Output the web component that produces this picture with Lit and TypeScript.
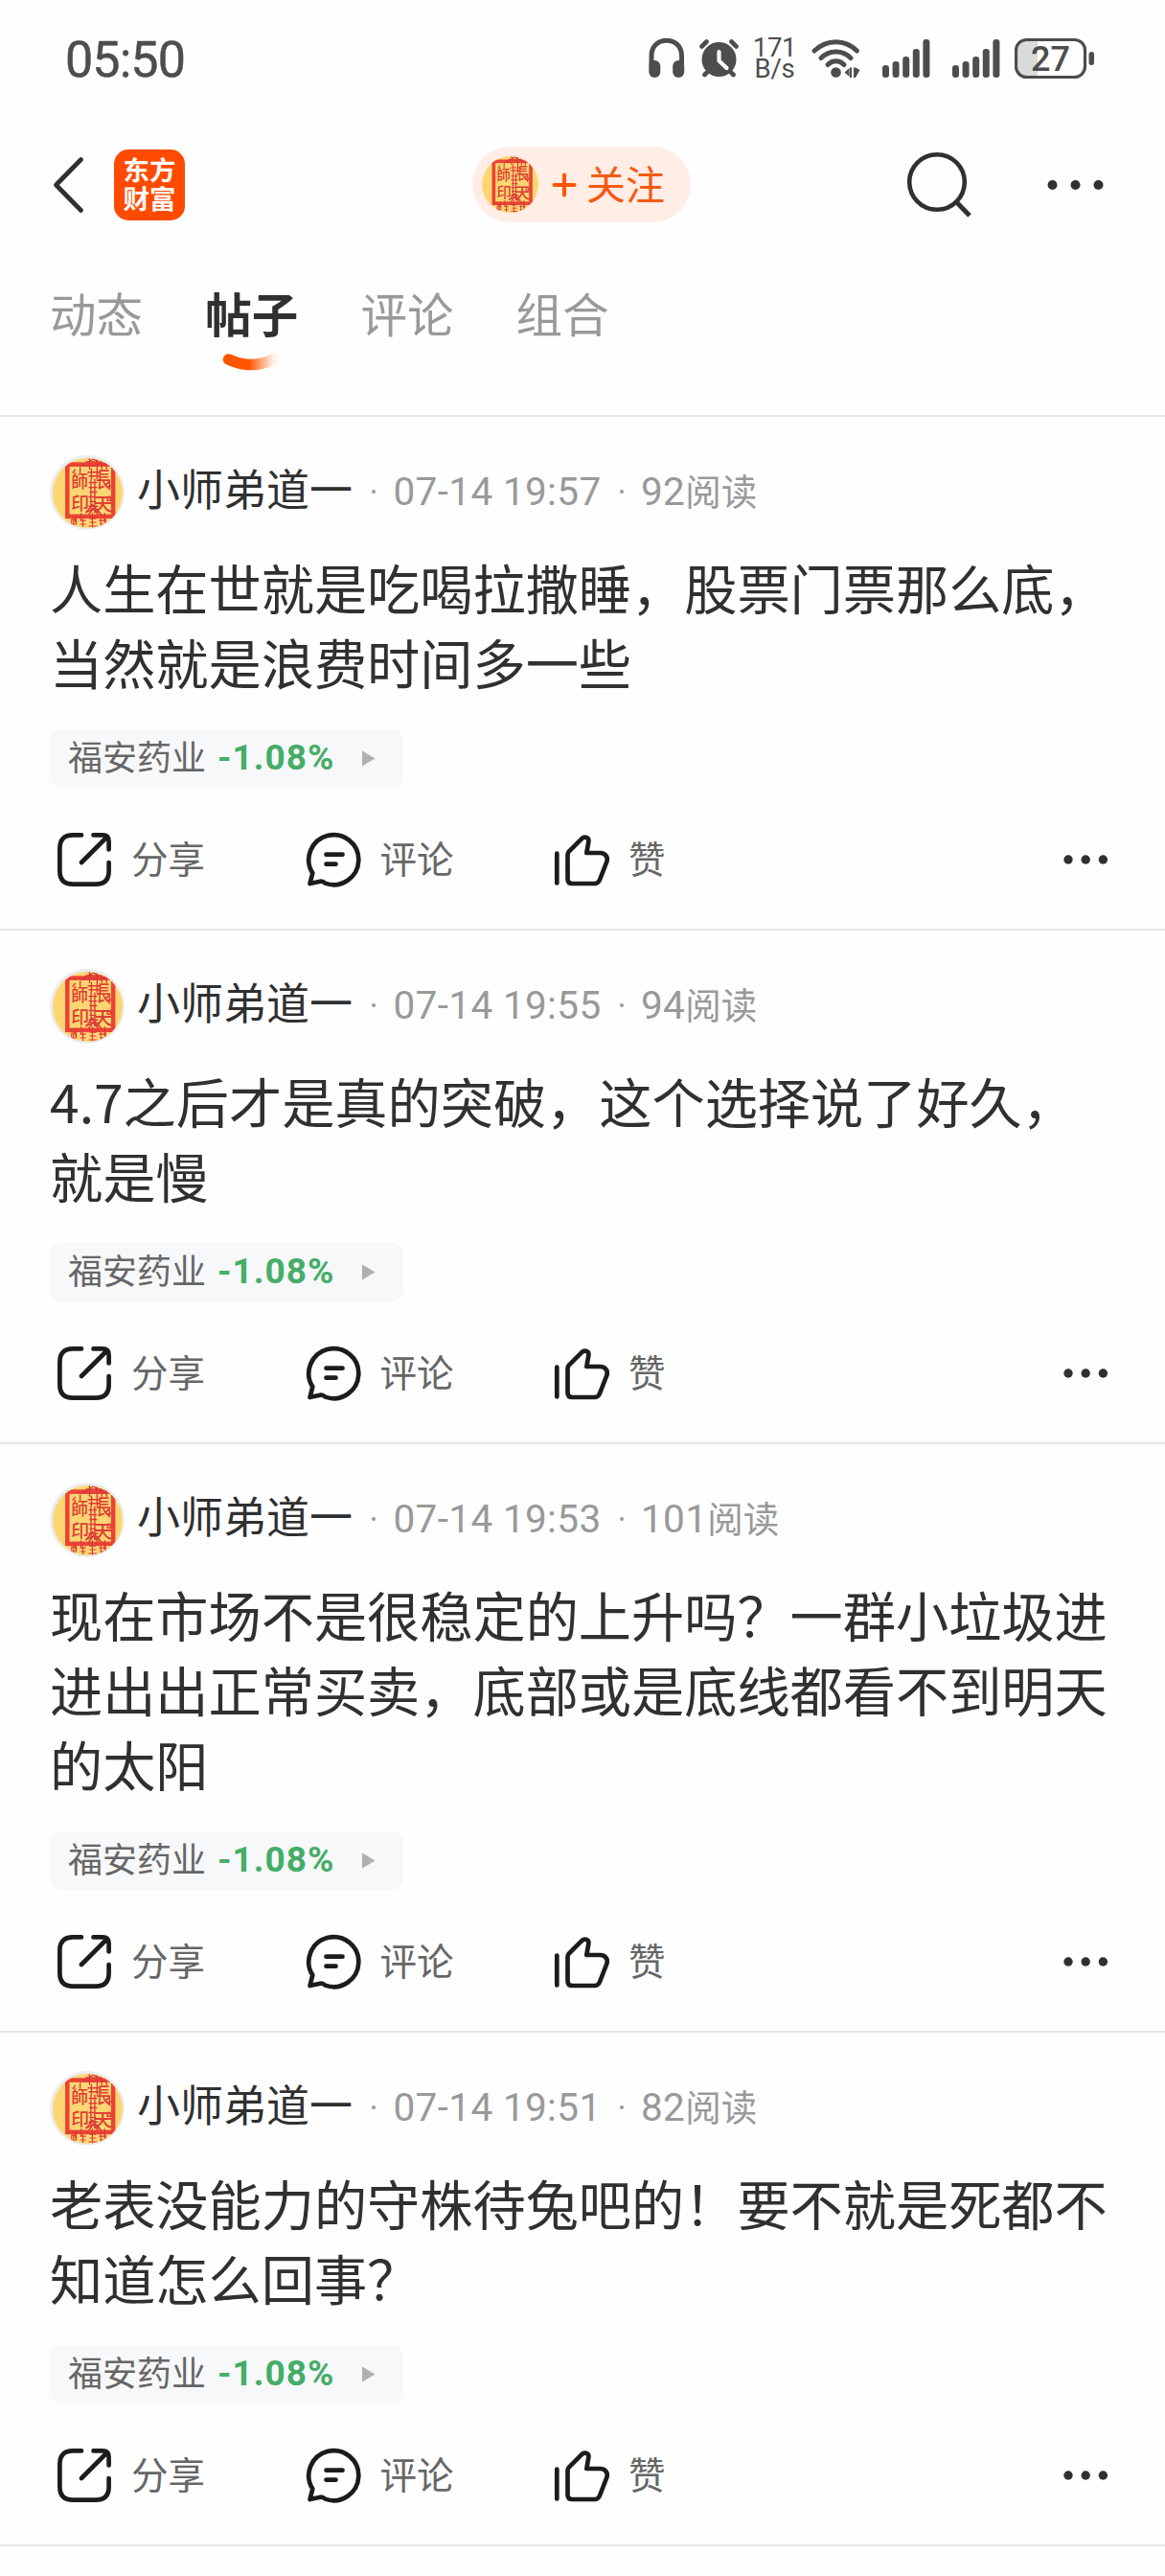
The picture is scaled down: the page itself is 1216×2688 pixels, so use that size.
import { LitElement, html, css } from "lit";
import { customElement, property } from "lit/decorators.js";

interface Post {
  time: string;
  reads: number;
  lines: string[];
}

const POSTS: Post[] = [
  { time: "07-14 19:57", reads: 92, lines: ["人生在世就是吃喝拉撒睡，股票门票那么底，", "当然就是浪费时间多一些"] },
  { time: "07-14 19:55", reads: 94, lines: ["4.7之后才是真的突破，这个选择说了好久，", "就是慢"] },
  { time: "07-14 19:53", reads: 101, lines: ["现在市场不是很稳定的上升吗？一群小垃圾进", "进出出正常买卖，底部或是底线都看不到明天", "的太阳"] },
  { time: "07-14 19:51", reads: 82, lines: ["老表没能力的守株待兔吧的！要不就是死都不", "知道怎么回事？"] },
];

@customElement("seal-avatar")
export class SealAvatar extends LitElement {
  static styles = css`
    :host { display: block; }
    svg { display: block; width: 100%; height: 100%; }
    .seal { font-family: "Noto Sans CJK TC", sans-serif; fill: #dc3f33; font-weight: 500; }
  `;
  render() {
    return html`<svg viewBox="0 0 74 74">
      <defs><clipPath id="c"><circle cx="37" cy="37" r="37" /></clipPath></defs>
      <g clip-path="url(#c)">
        <rect width="74" height="74" fill="#fdd673" />
        <rect x="15.5" y="6.700" width="48.500" height="55" fill="none" stroke="#ea4335" stroke-width="4.600" />
        <g fill="none" stroke="#dc3838" stroke-width="1.400">
          <path d="M29 9L43 1L57 9M39 0V12M47 0V12M35 4H52M32 8H54M41 11V22M47 10V22M37 15H51M38 19H50" />
          <path d="M40.500 22V58M44.500 22V58M38 26H47M38 31H47M39 36H47M38 41H46M39 46H46M38 51H48M35 58L42 49L50 58M38 60L43 53L48 60" />
          <path d="M24 12L21 16M29 10V16M52 9V12M57 9V12M60 24V34M58 31L62 29M24 60V68M35 57L44 54L52 60M30 58V66M55 58V68" />
          <path d="M20 65H25V70H20ZM22 62V73M29 66H35M32 64V73M29 70H35M39 64H46M42 58V74M39 68H46M38 72H47M49 66H55M51 63V73M50 70H55M56 64V71" stroke-width="1.100" />
          <rect x="58" y="41" width="3" height="4" />
        </g>
        <text class="seal" x="19.500" y="31" font-size="18">師</text>
        <text class="seal" x="19.500" y="54.500" font-size="19">印</text>
        <text class="seal" transform="translate(45.500 30.500) scale(1 1.350)" x="0" y="0" font-size="16">長</text>
        <text class="seal" x="43" y="55.500" font-size="20">天</text>
      </g>
    </svg>`;
  }
}

@customElement("post-card")
export class PostCard extends LitElement {
  @property({ attribute: false }) post!: Post;

  static styles = css`
    :host {
      display: block;
      border-bottom: 2px solid #e6e6e6;
      padding: 40px 52px 44px;
    }
    .head { display: flex; align-items: center; height: 78px; }
    .avatar { box-sizing: border-box; width: 78px; height: 78px; padding: 2.5px; border-radius: 50%; background: #ececec; }
    .name { margin-left: 13px; width: 226px; font-size: 45px; line-height: 64px; color: #303030; padding-bottom: 11px; white-space: nowrap; }
    .meta { display: flex; align-items: center; padding-bottom: 2px; font-family: Roboto, sans-serif; font-size: 40.5px; line-height: 60px; letter-spacing: 0.35px; color: #999; white-space: nowrap; }
    .unit { font-family: "Noto Sans CJK SC", sans-serif; font-size: 37.5px; letter-spacing: 0; margin-bottom: 5px; }
    .dot { width: 4px; height: 4px; border-radius: 50%; background: #999; margin: 0 18.5px 0 19px; }
    .body { margin-top: 20px; font-size: 55.2px; line-height: 78px; color: #303030; }
    .line { height: 78px; white-space: nowrap; text-spacing-trim: space-all; }
    .stock { display: flex; align-items: center; box-sizing: border-box; width: 369px; height: 61px; margin-top: 32px; padding-left: 19px; border-radius: 12px; background: #f7f8fa; }
    .stock-name { font-size: 36px; line-height: 54px; color: #666; padding-bottom: 7px; }
    .change { width: 150px; margin-left: 12px; padding-bottom: 1px; font-family: Roboto, sans-serif; font-weight: 700; font-size: 37px; line-height: 56px; letter-spacing: 1px; color: #45ad68; }
    .arrow { width: 15px; height: 17px; }
    .actions { display: flex; align-items: center; height: 56px; margin-top: 47px; padding-left: 7px; }
    .action { display: flex; align-items: center; width: 259.5px; color: #666; font-size: 38.5px; line-height: 56px; }
    .label { margin-left: 20px; padding-bottom: 7px; white-space: nowrap; }
    .icon { width: 58px; height: 58px; flex: none; }
    .more { width: 48px; height: 12px; margin-left: auto; margin-right: 7.5px; }
    svg { display: block; }
    .stroke { fill: none; stroke: #1c1c1c; stroke-width: 4.7; stroke-linecap: round; stroke-linejoin: round; }
  `;

  render() {
    const p = this.post;
    return html`
      <div class="head">
        <seal-avatar class="avatar"></seal-avatar>
        <span class="name">小师弟道一</span>
        <span class="meta"><i class="dot"></i>${p.time}<i class="dot"></i>${p.reads}<span class="unit">阅读</span></span>
      </div>
      <div class="body">${p.lines.map((l) => html`<div class="line">${l}</div>`)}</div>
      <div class="stock">
        <span class="stock-name">福安药业</span>
        <span class="change">-1.08%</span>
        <svg class="arrow" viewBox="0 0 15 17"><path d="M1 0.500L14.500 8.500L1 16.500Z" fill="#b0b0b0" /></svg>
      </div>
      <div class="actions">
        <div class="action">
          <svg class="icon" viewBox="0 0 58 58"><path class="stroke" d="M26 3.400H17Q3.400 3.400 3.400 17V41Q3.400 54.600 17 54.600H41Q54.600 54.600 54.600 41V32M38.500 3.400H48Q54.600 3.400 54.600 10V18.500M52 6L26 32" /></svg>
          <span class="label">分享</span>
        </div>
        <div class="action">
          <svg class="icon" viewBox="0 0 58 58"><path class="stroke" d="M4.500 54L7.300 43A26 26 0 1 1 20.500 53.600Q17.500 50.800 14 52ZM21.500 23.700H38.500M21.500 33.700H31.500" /></svg>
          <span class="label">评论</span>
        </div>
        <div class="action">
          <svg class="icon" viewBox="0 0 58 58"><path class="stroke" d="M3.300 22.500V53.500M14.500 24Q14.500 22 16 20.300L29 7.300C32.500 4 37 6 36.300 10.300L34.300 22H48.500C54 22 57.300 27 55 32L48 50Q46.500 54 42.500 54H19.500Q14.500 54 14.500 49Z" /></svg>
          <span class="label">赞</span>
        </div>
        <svg class="more" viewBox="0 0 48 12"><g fill="#303030"><circle cx="6" cy="6" r="4.700" /><circle cx="24.200" cy="6" r="4.700" /><circle cx="42.400" cy="6" r="4.700" /></g></svg>
      </div>
    `;
  }
}

@customElement("app-root")
export class AppRoot extends LitElement {
  static styles = css`
    :host {
      display: block;
      width: 1216px;
      height: 2688px;
      overflow: hidden;
      background: #fefefe;
      font-family: "Noto Sans CJK SC", sans-serif;
    }
    svg { display: block; flex: none; }
    .status { display: flex; align-items: flex-start; box-sizing: border-box; height: 124px; padding: 38px 0 0 68px; color: #4d4d4d; }
    .clock { width: 609px; font-family: Roboto, sans-serif; font-size: 52px; line-height: 49px; letter-spacing: -0.9px; -webkit-text-stroke: 0.5px #4d4d4d; }
    .rate { box-sizing: border-box; width: 62px; margin-left: 11px; padding: 1px 11px 0 0; font-family: Roboto, sans-serif; font-size: 27.5px; line-height: 22px; text-align: center; letter-spacing: -0.3px; white-space: nowrap; }
    .bars { margin-right: 23px; }
    .battery { margin-left: -8px; font-family: Roboto, sans-serif; font-weight: 500; }
    .nav { display: flex; align-items: center; height: 137px; padding-left: 54px; }
    .logo { box-sizing: border-box; width: 74px; height: 74px; margin-left: 31px; padding: 5px 0 0; text-align: center; border-radius: 15px; background: #ff4a00; color: #fff; font-size: 27.5px; font-weight: 700; line-height: 30px; }
    .follow { display: flex; align-items: center; box-sizing: border-box; width: 228px; height: 79px; margin-left: 300px; padding-left: 10px; border-radius: 40px; background: #ffede6; color: #f55a10; }
    .mini { width: 59px; height: 59px; }
    .plus { margin-left: 14px; }
    .follow-label { margin-left: 10px; padding-bottom: 5px; font-size: 41px; line-height: 60px; white-space: nowrap; }
    .search { margin-left: 223.5px; }
    .dots { margin-left: 72px; }
    .tabs { display: flex; box-sizing: border-box; height: 174px; padding: 31px 0 0 52px; border-bottom: 2px solid #e6e6e6; color: #999; }
    .tab { width: 162.2px; font-size: 48.5px; line-height: 68px; }
    .tab.on { color: #303030; font-weight: 700; }
    .smile { margin: 8px 0 0 18px; }
  `;

  private bars() {
    return html`<svg class="bars" width="50" height="44" viewBox="0 0 50 44"><g fill="#4d4d4d">
      <rect x="0" y="30" width="7" height="13" rx="3.300" /><rect x="10.600" y="26" width="7" height="17" rx="3.300" />
      <rect x="21.200" y="21" width="7" height="22" rx="3.300" /><rect x="31.800" y="13" width="7" height="30" rx="3.300" />
      <rect x="42.400" y="3" width="7" height="40" rx="3.300" /></g></svg>`;
  }

  render() {
    return html`
      <div class="status">
        <span class="clock">05:50</span>
        <svg width="53" height="44" viewBox="0 0 53 44">
          <path d="M3 30V20C3 -1 34.500 -1 34.500 20V30" fill="none" stroke="#4d4d4d" stroke-width="5" />
          <rect x="0.300" y="25" width="12" height="18" rx="6" fill="#4d4d4d" /><rect x="25.200" y="25" width="12" height="18" rx="6" fill="#4d4d4d" />
        </svg>
        <svg width="42" height="44" viewBox="0 0 42 44">
          <circle cx="20.500" cy="24" r="18" fill="#4d4d4d" />
          <path d="M2.500 10.500L7.500 5.500M33.500 5.500L38.500 10.500M5.500 40L10 35.500M35.500 40L31 35.500" stroke="#4d4d4d" stroke-width="4.600" stroke-linecap="round" />
          <path d="M20.500 16V25.500L28.500 33" fill="none" stroke="#fefefe" stroke-width="4.200" stroke-linecap="round" stroke-linejoin="round" />
        </svg>
        <div class="rate">171<br />B/s</div>
        <svg width="76" height="44" viewBox="0 0 76 44">
          <g fill="none" stroke="#4d4d4d" stroke-width="5" stroke-linecap="round">
            <path d="M5 15C18 2.500 37 2.500 49.500 15M12 22.500C21 13.800 34 13.800 43 22.500M19 29.500C24 24.500 31 24.500 36 29.500" />
          </g>
          <circle cx="27.500" cy="37.500" r="5.300" fill="#4d4d4d" />
          <path d="M36.500 37.500L41.500 33V42ZM42 32.500H44V43H42ZM46 32.500H48L52.500 35L48 43H46Z" fill="#4d4d4d" />
        </svg>
        ${this.bars()}${this.bars()}
        <svg class="battery" width="90" height="46" viewBox="0 0 90 46">
          <path d="M24 3.500H12.500Q1.500 3.500 1.500 14.500V31.500Q1.500 42.500 12.500 42.500H24Z" fill="#dadada" />
          <rect x="1.500" y="3.500" width="72" height="39" rx="11" fill="none" stroke="#4d4d4d" stroke-width="3.200" />
          <rect x="77.500" y="16" width="5.500" height="14" rx="2.700" fill="#4d4d4d" />
          <text x="37.500" y="36" text-anchor="middle" font-size="36" fill="#4d4d4d">27</text>
        </svg>
      </div>
      <div class="nav">
        <svg width="34" height="60" viewBox="0 0 34 60"><path d="M30.500 3.500L4.500 30L30.500 56.500" fill="none" stroke="#303030" stroke-width="4.800" stroke-linecap="round" stroke-linejoin="round" /></svg>
        <div class="logo">东方<br />财富</div>
        <div class="follow">
          <seal-avatar class="mini"></seal-avatar>
          <svg class="plus" width="26" height="26" viewBox="0 0 26 26"><path d="M13 2.500V23.500M2.500 13H23.500" stroke="#ff5500" stroke-width="4" stroke-linecap="round" /></svg>
          <span class="follow-label">关注</span>
        </div>
        <svg class="search" width="76" height="70" viewBox="0 0 76 70"><circle cx="33" cy="32" r="28.800" fill="none" stroke="#303030" stroke-width="4.600" /><path d="M53.500 53L67 67" stroke="#303030" stroke-width="4.800" /></svg>
        <svg class="dots" width="60" height="12" viewBox="0 0 60 12"><g fill="#303030"><circle cx="5.500" cy="6" r="5" /><circle cx="29.500" cy="6" r="5" /><circle cx="53.500" cy="6" r="5" /></g></svg>
      </div>
      <div class="tabs">
        <div class="tab">动态</div>
        <div class="tab on">帖子
          <svg class="smile" width="60" height="20" viewBox="0 0 60 20">
            <defs><linearGradient id="g"><stop offset="0.450" stop-color="#ff5500" /><stop offset="1" stop-color="#ff5500" stop-opacity="0.050" /></linearGradient></defs>
            <path d="M6.500 7Q29.500 18 54 7" fill="none" stroke="url(#g)" stroke-width="11.500" stroke-linecap="round" />
          </svg>
        </div>
        <div class="tab">评论</div>
        <div class="tab">组合</div>
      </div>
      ${POSTS.map((p) => html`<post-card .post=${p}></post-card>`)}
    `;
  }
}
